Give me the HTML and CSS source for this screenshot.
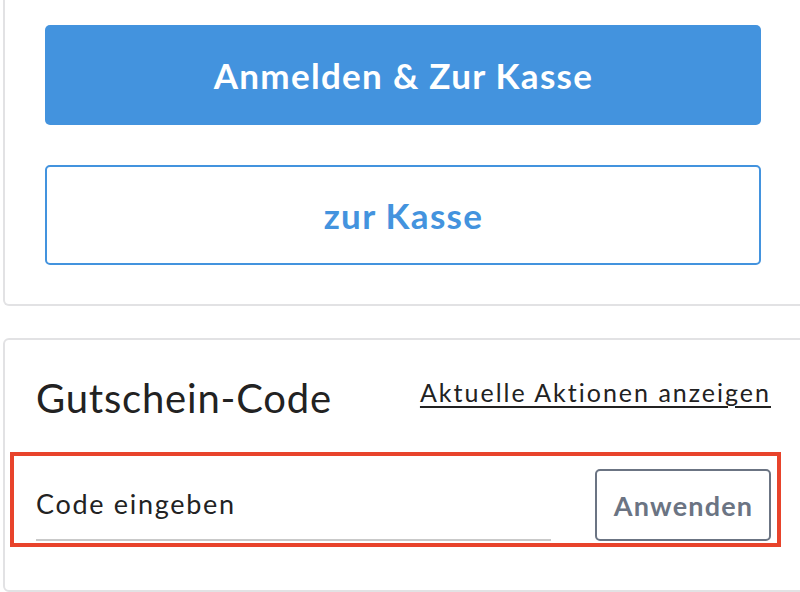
FILE: index.html
```html
<!DOCTYPE html>
<html lang="de">
<head>
<meta charset="utf-8">
<link rel="stylesheet" href="styles.css">
</head>
<body>
<div class="page">
  <section class="card card-top">
    <button class="btn btn-primary">Anmelden &amp; Zur Kasse</button>
    <button class="btn btn-outline">zur Kasse</button>
  </section>
  <section class="card card-coupon">
    <div class="coupon-head">
      <h2 class="coupon-title">Gutschein-Code</h2>
      <a class="coupon-link" href="#">Aktuelle Aktionen anzeigen</a>
    </div>
    <div class="highlight">
      <div class="coupon-row">
        <div class="code-input">Code eingeben</div>
        <button class="btn-apply">Anwenden</button>
      </div>
    </div>
  </section>
</div>
</body>
</html>
```

FILE: styles.css
```css
* { box-sizing: border-box; }
html, body { margin: 0; padding: 0; background: #fff; }
body { font-family: Lato, "Open Sans", sans-serif; color: #222; overflow: hidden; }
.page {
  width: 800px; height: 592px;
  padding-left: 3px;
  display: flex; flex-direction: column;
}
.card {
  border: 2px solid #e2e2e4;
  border-radius: 6px;
  background: #fff;
  margin-right: -12px;
}
.card-top {
  border-top: none;
  border-top-left-radius: 0;
  border-top-right-radius: 0;
  padding: 25px 0 39px 40px;
  display: flex; flex-direction: column; gap: 40px;
}
.btn {
  width: 716px; height: 100px;
  border-radius: 5px;
  font-family: Lato, sans-serif;
  font-weight: 700;
  font-size: 35px;
  letter-spacing: 1.3px;
  padding: 0 0 0 1px;
  cursor: pointer;
}
.btn-primary {
  background: #4393de;
  color: #fff;
  border: none;
}
.btn-outline {
  background: #fff;
  color: #4393de;
  border: 2px solid #4393de;
}
.card-coupon {
  margin-top: 32px;
  height: 254px;
  padding: 34px 0 0 0;
}
.coupon-head {
  display: flex; justify-content: space-between; align-items: flex-start;
  padding: 0 35px 0 31px;
  width: 799px;
}
.coupon-title {
  margin: 0;
  font-weight: 400;
  font-size: 40px;
  letter-spacing: 0.8px;
  color: #222;
  line-height: 48px;
}
.coupon-link {
  color: #222;
  font-size: 25px;
  letter-spacing: 2px;
  line-height: 30px;
  margin: 3px -2px 0 0;
  text-decoration: underline;
  text-underline-offset: 4px;
  text-decoration-thickness: 1.5px;
}
.highlight {
  margin: 30px 0 0 5px;
  width: 771px;
  border: 4px solid #e8432b;
  padding: 13px 6px 2px 22px;
}
.coupon-row {
  display: flex; justify-content: space-between; align-items: flex-end;
}
.code-input {
  width: 515px;
  border-bottom: 2px solid #c9c9c9;
  font-size: 27px;
  letter-spacing: 1.7px;
  color: #222;
  padding: 0 0 17px 0;
  line-height: 36px;
}
.btn-apply {
  width: 176px; height: 72px;
  background: #fff;
  border: 2px solid #6b7483;
  border-radius: 5px;
  color: #6b7483;
  font-family: Lato, sans-serif;
  font-weight: 700;
  font-size: 27px;
  letter-spacing: 1.2px;
  padding: 0 0 0 1px;
}
```
